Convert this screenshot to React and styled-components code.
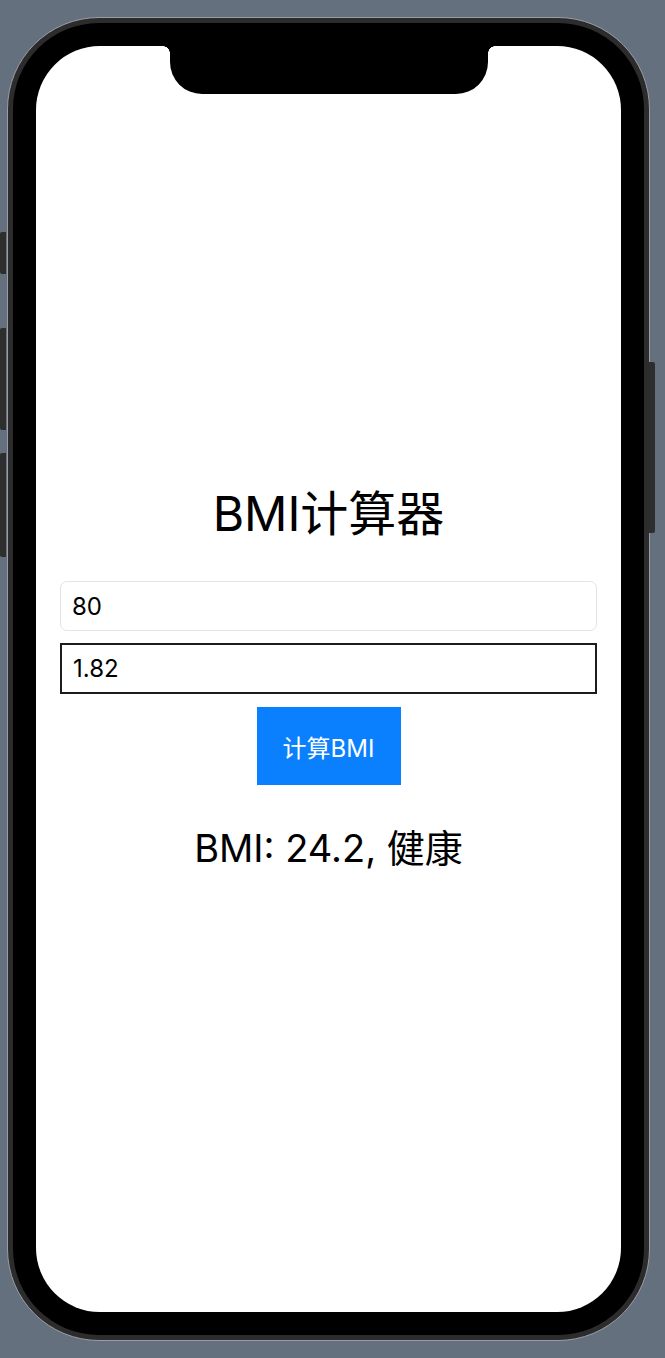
import React, { useState } from "react";
import styled, { createGlobalStyle } from "styled-components";

const GlobalStyle = createGlobalStyle`
  html, body {
    margin: 0;
    padding: 0;
    background-color: #64707e;
  }
  body {
    font-family: Inter, "Liberation Sans", "Noto Sans CJK SC", sans-serif;
  }
`;

const Page = styled.div`
  width: 665px;
  height: 1358px;
  padding: 17px 0 0 7px;
  box-sizing: border-box;
  overflow: hidden;
`;

const Device = styled.div`
  position: relative;
  width: 643px;
  box-sizing: border-box;
  border: 1px solid #9a9ea4;
  border-radius: 92px;
  padding: 5px;
  background-color: #2c2c2c;
`;

const Bezel = styled.div`
  background-color: #000;
  border-radius: 86px;
  padding: 23px;
`;

const SideButton = styled.div`
  position: absolute;
  width: 6px;
  background-color: #2e2e2e;
  top: ${(p) => p.$top}px;
  height: ${(p) => p.$height}px;
  ${(p) =>
    p.$right
      ? "right: -6px; border-radius: 0 2px 2px 0;"
      : "left: -8px; border-radius: 2px 0 0 2px;"}
`;

const Screen = styled.div`
  position: relative;
  height: 1266px;
  background-color: #fff;
  border-radius: 64px;
  overflow: hidden;
  display: flex;
  flex-direction: column;
  justify-content: center;
  padding: 0 24px;
`;

const Notch = styled.div`
  position: absolute;
  top: 0;
  left: 134px;
  width: 318px;
  height: 48px;
  background-color: #000;
  border-radius: 0 0 32px 32px;

  &::before,
  &::after {
    content: "";
    position: absolute;
    top: 0;
    width: 7px;
    height: 7px;
  }
  &::before {
    left: -7px;
    background: radial-gradient(circle at 0 100%, transparent 6.5px, #000 7px);
  }
  &::after {
    right: -7px;
    background: radial-gradient(circle at 100% 100%, transparent 6.5px, #000 7px);
  }
`;

const Content = styled.div`
  display: flex;
  flex-direction: column;
  align-items: center;
  margin-top: -2px;
`;

const Title = styled.h1`
  margin: 0 0 38px;
  font-size: 48px;
  line-height: 58px;
  font-weight: 400;
  color: #000;
`;

const Input = styled.input`
  width: 100%;
  box-sizing: border-box;
  height: ${(p) => (p.$focused ? 51 : 50)}px;
  margin-bottom: ${(p) => (p.$focused ? 13 : 12)}px;
  padding: 0 11px;
  font-family: inherit;
  font-size: 24px;
  color: #000;
  background-color: #fff;
  outline: none;
  border: ${(p) => (p.$focused ? "2px solid #1c1c1c" : "1px solid #e4e4e4")};
  border-radius: ${(p) => (p.$focused ? 0 : 7)}px;
`;

const Button = styled.button`
  width: 144px;
  height: 78px;
  border: none;
  background-color: #0a80ff;
  color: #fff;
  font-family: inherit;
  font-size: 24px;
  cursor: pointer;
  margin-bottom: 40px;
`;

const Result = styled.div`
  font-size: 38px;
  line-height: 46px;
  color: #000;
`;

const getStatus = (bmi) => {
  if (bmi < 18.5) return "偏瘦";
  if (bmi < 25) return "健康";
  if (bmi < 30) return "超重";
  return "肥胖";
};

export default function App() {
  const [weight, setWeight] = useState("80");
  const [height, setHeight] = useState("1.82");
  const [result, setResult] = useState("BMI: 24.2, 健康");

  const calc = () => {
    const w = parseFloat(weight);
    const h = parseFloat(height);
    if (!w || !h) return;
    const bmi = w / (h * h);
    setResult(`BMI: ${bmi.toFixed(1)}, ${getStatus(bmi)}`);
  };

  return (
    <>
      <GlobalStyle />
      <Page>
        <Device>
          <SideButton $top={214} $height={42} />
          <SideButton $top={310} $height={102} />
          <SideButton $top={435} $height={104} />
          <SideButton $right $top={344} $height={171} />
          <Bezel>
            <Screen>
              <Notch />
              <Content>
                <Title>BMI计算器</Title>
                <Input
                  value={weight}
                  onChange={(e) => setWeight(e.target.value)}
                />
                <Input
                  $focused
                  value={height}
                  onChange={(e) => setHeight(e.target.value)}
                />
                <Button onClick={calc}>计算BMI</Button>
                <Result>{result}</Result>
              </Content>
            </Screen>
          </Bezel>
        </Device>
      </Page>
    </>
  );
}
